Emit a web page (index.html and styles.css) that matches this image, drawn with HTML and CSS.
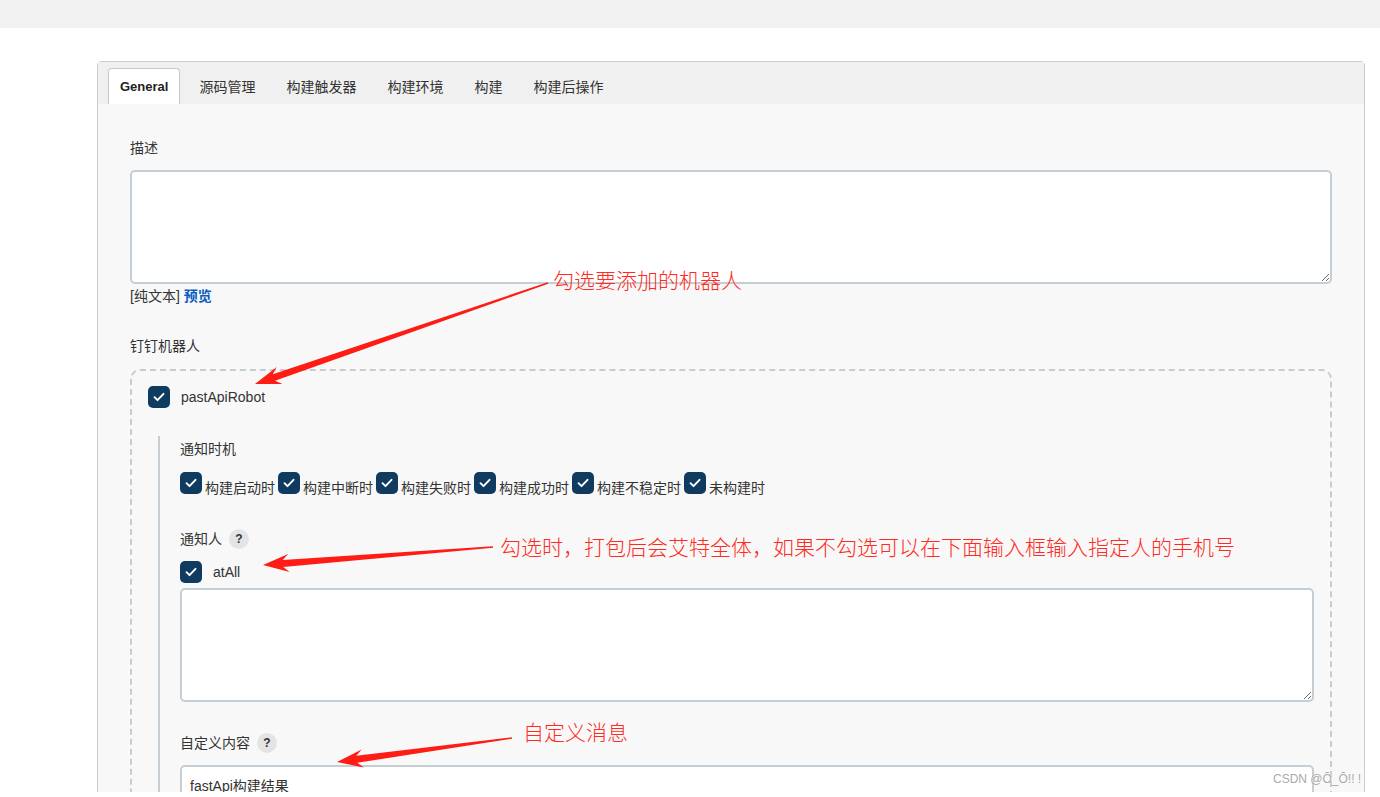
FILE: index.html
```html
<!DOCTYPE html>
<html lang="zh-CN">
<head>
    <meta charset="UTF-8">
    <meta name="viewport" content="width=device-width, initial-scale=1.0">
    <link rel="stylesheet" href="styles.css">
    <title>fastApi 配置</title>
</head>
<body>
<div class="screen">
    <div class="topbar"></div>

    <div class="main">
        <div class="panel">
            <div class="tabs">
                <span class="tab active">General</span>
                <span class="tab">源码管理</span>
                <span class="tab">构建触发器</span>
                <span class="tab">构建环境</span>
                <span class="tab">构建</span>
                <span class="tab">构建后操作</span>
            </div>

            <div class="panel-body">
                <div class="label">描述</div>
                <textarea class="area"></textarea>
                <div class="hint">[纯文本] <a href="#" class="preview">预览</a></div>

                <div class="label section">钉钉机器人</div>
                <div class="robot-box">
                    <div class="check-line">
                        <span class="cb"><svg viewBox="0 0 22 22"><path d="M6.5 11.2l3 3 6-6.4"/></svg></span>
                        <span class="check-text">pastApiRobot</span>
                    </div>

                    <div class="nested">
                        <div class="label">通知时机</div>
                        <div class="timing">
                            <span class="cb"><svg viewBox="0 0 22 22"><path d="M6.5 11.2l3 3 6-6.4"/></svg></span><span class="t">构建启动时</span>
                            <span class="cb"><svg viewBox="0 0 22 22"><path d="M6.5 11.2l3 3 6-6.4"/></svg></span><span class="t">构建中断时</span>
                            <span class="cb"><svg viewBox="0 0 22 22"><path d="M6.5 11.2l3 3 6-6.4"/></svg></span><span class="t">构建失败时</span>
                            <span class="cb"><svg viewBox="0 0 22 22"><path d="M6.5 11.2l3 3 6-6.4"/></svg></span><span class="t">构建成功时</span>
                            <span class="cb"><svg viewBox="0 0 22 22"><path d="M6.5 11.2l3 3 6-6.4"/></svg></span><span class="t">构建不稳定时</span>
                            <span class="cb"><svg viewBox="0 0 22 22"><path d="M6.5 11.2l3 3 6-6.4"/></svg></span><span class="t">未构建时</span>
                        </div>

                        <div class="label help-row gap-top">通知人 <span class="help">?</span></div>
                        <div class="check-line at-all">
                            <span class="cb"><svg viewBox="0 0 22 22"><path d="M6.5 11.2l3 3 6-6.4"/></svg></span>
                            <span class="check-text">atAll</span>
                        </div>
                        <textarea class="area phones"></textarea>

                        <div class="label help-row gap-top">自定义内容 <span class="help">?</span></div>
                        <input class="text-input" type="text" value="fastApi构建结果">
                    </div>
                </div>
            </div>
        </div>
    </div>

    <div class="notes">
        <svg class="arrows" viewBox="0 0 1380 792">
            <polygon points="547.8,282.3 272.8,374.2 276.7,367 255,384 282.5,384 275,380.8 548.2,283.7"/>
            <polygon points="492.9,546.3 282.6,559.9 288.2,553.9 263,565 289.6,571.9 283.2,566.9 493.1,547.7"/>
            <polygon points="511.9,737.3 356.3,755.8 361.6,749.6 337,762 364,767.4 357.3,762.8 512.1,738.7"/>
        </svg>
        <span class="note note-1">勾选要添加的机器人</span>
        <span class="note note-2">勾选时，打包后会艾特全体，如果不勾选可以在下面输入框输入指定人的手机号</span>
        <span class="note note-3">自定义消息</span>
    </div>

    <div class="mark">CSDN @Ō_Ō!! !</div>
</div>
</body>
</html>
```

FILE: styles.css
```css
body {
    margin: 0;
    background: #fff;
    font-family: "Liberation Sans", "Noto Sans CJK SC", sans-serif;
    font-size: 14px;
    color: #333;
}
.screen {
    position: relative;
    height: 792px;
    overflow: hidden;
}
.topbar {
    height: 28px;
    background: #f2f2f2;
}
.main {
    padding: 33px 0 0 97px;
}
.panel {
    width: 1268px;
    box-sizing: border-box;
    border: 1px solid #c8ced3;
    border-radius: 4px 4px 0 0;
    background: #f8f8f8;
}
.tabs {
    display: flex;
    gap: 7px;
    height: 42px;
    padding: 6px 0 0 10px;
    box-sizing: border-box;
    background: #f0f0f0;
}
.tab {
    height: 36px;
    line-height: 36px;
    padding: 0 11px;
    border: 1px solid transparent;
    border-bottom: none;
    border-radius: 4px 4px 0 0;
    box-sizing: border-box;
    white-space: nowrap;
}
.tab.active {
    background: #fff;
    border-color: #c4ccd2;
    font-size: 13px;
    font-weight: bold;
    color: #222;
}
.panel-body {
    padding: 34px 32px 40px;
}
.label {
    line-height: 20px;
    margin-bottom: 12px;
}
.label.section {
    margin-top: 30px;
    margin-bottom: 13px;
}
.area {
    display: block;
    width: 100%;
    height: 114px;
    box-sizing: border-box;
    margin: 0;
    border: 2px solid #c5ced4;
    border-radius: 5px;
    background: #fff;
    font: inherit;
}
.hint {
    margin-top: 2px;
    line-height: 20px;
}
.preview {
    color: #0b5cc2;
    font-weight: bold;
    text-decoration: none;
}
.robot-box {
    border: 2px dashed #c5ccd2;
    border-radius: 10px;
    padding: 15px 16px 30px;
}
.check-line {
    display: flex;
    align-items: center;
    gap: 11px;
    height: 22px;
}
.cb {
    display: inline-flex;
    width: 22px;
    height: 22px;
    flex: none;
    border-radius: 5px;
    background: #0e3b5f;
}
.cb svg {
    width: 22px;
    height: 22px;
}
.cb path {
    fill: none;
    stroke: #fff;
    stroke-width: 1.9;
    stroke-linecap: round;
    stroke-linejoin: round;
}
.check-text {
    font-size: 14px;
}
.nested {
    margin: 28px 0 0 10px;
    padding: 3px 0 0 20px;
    border-left: 2px solid #c8cfd4;
}
.nested .label {
    margin-bottom: 13px;
}
.timing {
    display: flex;
    align-items: flex-end;
}
.timing .cb {
    margin: 0 3px 4px 0;
}
.timing .t {
    line-height: 20px;
    margin-right: 3px;
}
.help-row {
    display: flex;
    align-items: center;
    gap: 7px;
}
.nested .gap-top {
    margin-top: 31px;
    margin-bottom: 12px;
}
.help {
    width: 20px;
    height: 20px;
    border-radius: 50%;
    background: #e4e4e4;
    color: #333;
    font-size: 12px;
    font-weight: bold;
    line-height: 20px;
    text-align: center;
}
.phones {
    margin-top: 5px;
}
.text-input {
    display: block;
    width: 100%;
    height: 40px;
    box-sizing: border-box;
    padding: 0 8px;
    border: 2px solid #c5ced4;
    border-radius: 5px;
    background: #fff;
    font: inherit;
    color: #333;
}
.notes {
    position: absolute;
    inset: 0;
    pointer-events: none;
}
.arrows {
    position: absolute;
    left: 0;
    top: 0;
    width: 1380px;
    height: 792px;
}
.arrows polygon {
    fill: #ff1c14;
}
.note {
    position: absolute;
    font-family: "Noto Sans CJK SC", sans-serif;
    font-size: 21px;
    font-weight: 300;
    line-height: 22px;
    color: #ff2a22;
    white-space: nowrap;
}
.note-1 {
    left: 553px;
    top: 268px;
}
.note-2 {
    left: 500px;
    top: 535px;
}
.note-3 {
    left: 523px;
    top: 720px;
}
.mark {
    position: absolute;
    left: 1273px;
    top: 772px;
    font-size: 12px;
    color: #aaa;
    text-shadow: 0 0 2px #fff;
    white-space: nowrap;
}
```
